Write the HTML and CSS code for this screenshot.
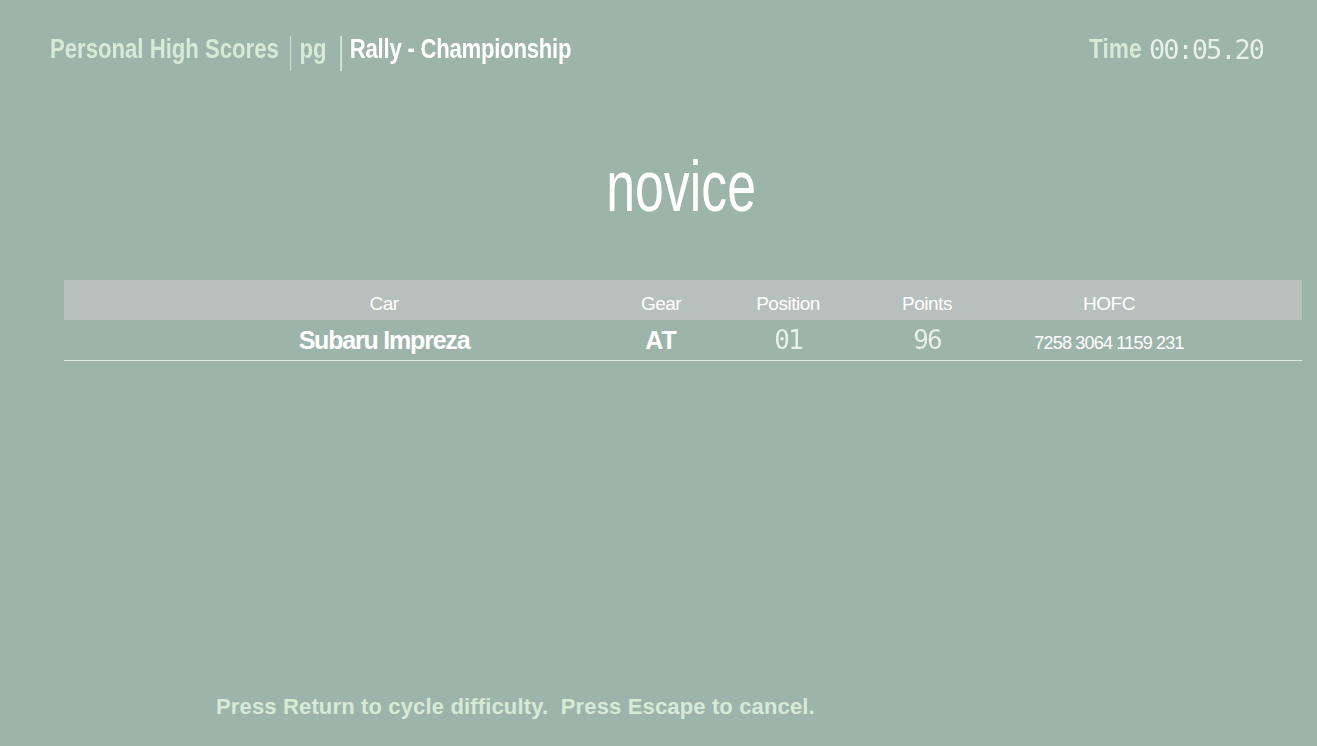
FILE: index.html
```html
<!DOCTYPE html>
<html>
<head>
<meta charset="utf-8">
<link rel="stylesheet" href="styles.css">
</head>
<body>
<div class="screen">
  <header class="topbar">
    <div class="crumbs">
      <span class="crumb dim">Personal High Scores</span>
      <span class="sep sep-first"></span>
      <span class="crumb dim">pg</span>
      <span class="sep sep-second"></span>
      <span class="crumb bright title">Rally - Championship</span>
    </div>
    <div class="timer">
      <span class="crumb dim time-label">Time</span>
      <span class="lcd lcd-time">00:05.20</span>
    </div>
  </header>

  <h1 class="level"><span class="level-text">novice</span></h1>

  <section class="table">
    <div class="row head">
      <div class="cell">Car</div>
      <div class="cell">Gear</div>
      <div class="cell">Position</div>
      <div class="cell">Points</div>
      <div class="cell">HOFC</div>
    </div>
    <div class="row body">
      <div class="cell strong car">Subaru Impreza</div>
      <div class="cell strong">AT</div>
      <div class="cell"><span class="lcd lcd-cell">01</span></div>
      <div class="cell"><span class="lcd lcd-cell">96</span></div>
      <div class="cell code">7258 3064 1159 231</div>
    </div>
  </section>

  <div class="spacer"></div>

  <footer class="hint">Press Return to cycle difficulty.&nbsp; Press Escape to cancel.</footer>
</div>
</body>
</html>
```

FILE: styles.css
```css
html, body {
  margin: 0;
  padding: 0;
  height: 100%;
}
body {
  background: #9db4ab;
  font-family: "Liberation Sans", Arial, sans-serif;
  color: #ffffff;
  overflow: hidden;
}
.screen {
  height: 746px;
  display: flex;
  flex-direction: column;
}
.topbar {
  display: flex;
  justify-content: space-between;
  align-items: center;
  padding: 36px 54px 0 50px;
  height: 35px;
}
.crumbs, .timer {
  display: flex;
  align-items: center;
}
.crumbs {
  transform: scaleX(0.82);
  transform-origin: left center;
}
.crumb {
  font-weight: bold;
  font-size: 27px;
  line-height: 27px;
  padding-bottom: 8px;
  white-space: nowrap;
}
.title { letter-spacing: -0.3px; }
.dim { color: #d6ead6; }
.bright { color: #ffffff; }
.sep {
  width: 1.25px;
  height: 35px;
  background: #dcebe2;
}
.sep-first { margin: 0 10px 0 14px; }
.sep-second { margin: 0 10px 0 17px; }
.time-label {
  display: inline-block;
  transform: scaleX(0.84);
  transform-origin: right center;
  margin-right: 7px;
}
.lcd {
  font-family: "DejaVu Sans Mono", "Liberation Mono", monospace;
  font-weight: normal;
  color: transparent;
  background-image: radial-gradient(circle at 1px 1px, #e9f1ec 0.75px, rgba(220, 232, 226, 0.4) 1.25px);
  background-size: 2px 2px;
  -webkit-background-clip: text;
  background-clip: text;
}
.lcd-time {
  font-size: 27px;
  letter-spacing: -2px;
  line-height: 27px;
  padding-bottom: 8px;
  white-space: nowrap;
}
.level {
  margin: 75px 0 0 0;
  padding-left: 45px;
  text-align: center;
  font-weight: normal;
  font-size: 72px;
  line-height: 80px;
  color: #ffffff;
  height: 80px;
}
.level-text {
  display: inline-block;
  transform: scaleX(0.72);
  transform-origin: center;
}
.table {
  margin: 54px 15px 0 64px;
}
.row {
  display: grid;
  grid-template-columns: 480px 74px 180px 98px 266px;
  padding-left: 80px;
  align-items: center;
}
.head {
  background: #b8c0bd;
  height: 40px;
}
.head .cell {
  font-size: 19px;
  letter-spacing: -0.5px;
  padding-top: 7px;
}
.body {
  height: 40px;
  border-bottom: 1px solid #dcebe2;
}
.cell {
  text-align: center;
  white-space: nowrap;
}
.strong {
  font-weight: bold;
  font-size: 25px;
}
.car { letter-spacing: -1.2px; }
.lcd-cell {
  font-size: 26px;
  letter-spacing: -2px;
  line-height: 30px;
}
.code {
  font-size: 18px;
  letter-spacing: -0.8px;
  padding-top: 6px;
}
.spacer { flex: 1; }
.hint {
  padding: 0 0 24px 216px;
  font-weight: bold;
  font-size: 22px;
  letter-spacing: 0.15px;
  color: #d6ead6;
  line-height: 30px;
  white-space: nowrap;
}
```
